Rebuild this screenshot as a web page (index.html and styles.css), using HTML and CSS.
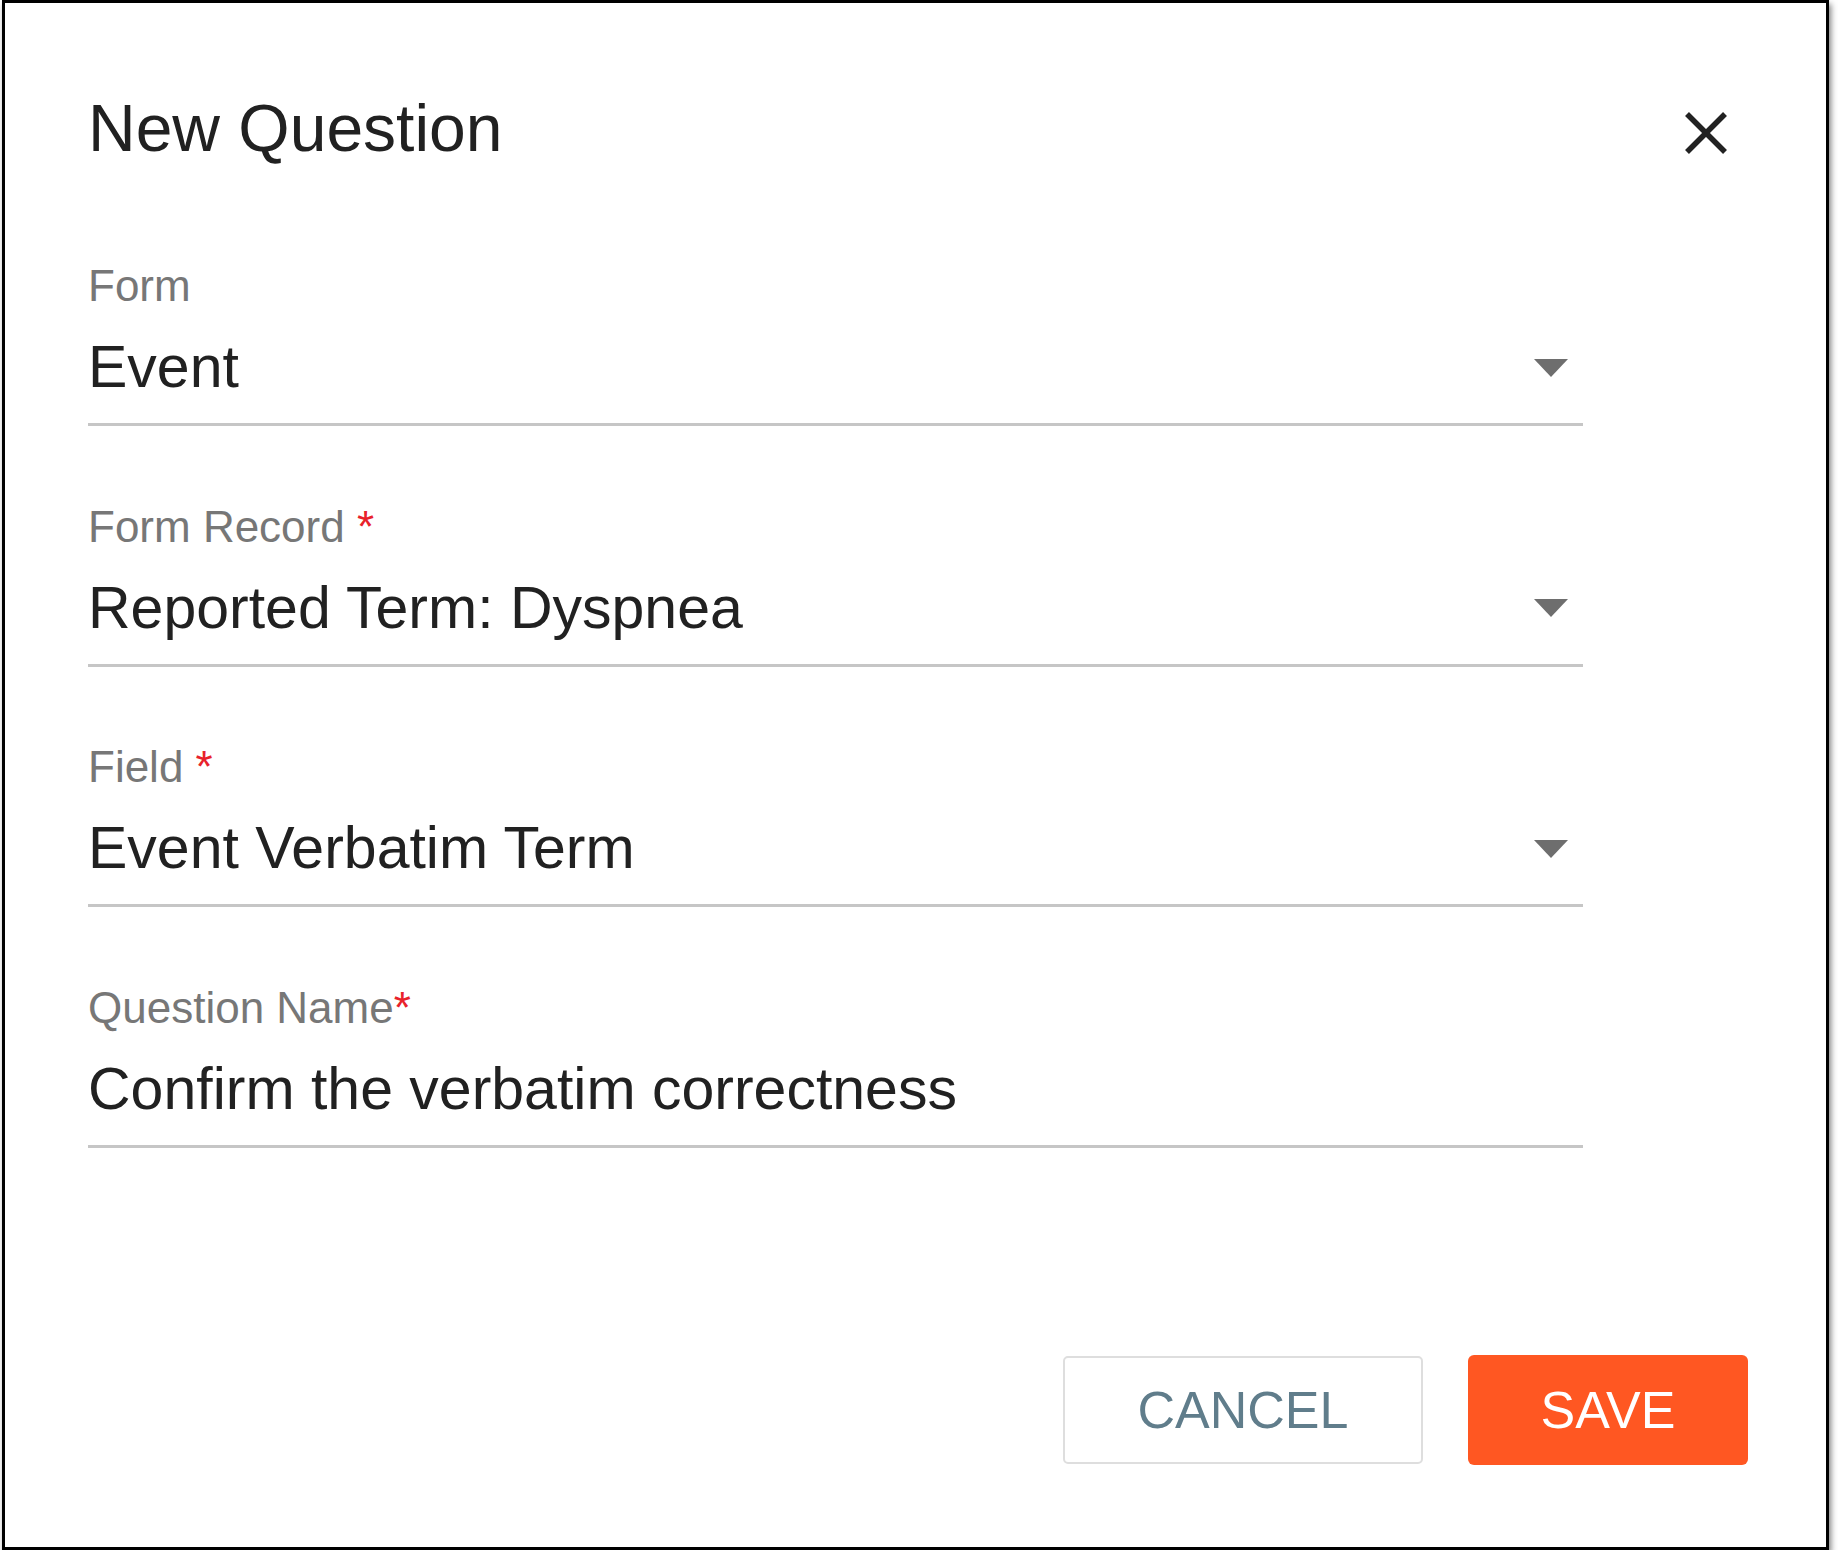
FILE: index.html
```html
<!DOCTYPE html>
<html lang="en">

<head>
    <meta charset="UTF-8">
    <title>New Question</title>
    <link rel="stylesheet" href="styles.css">
</head>

<body>
    <div class="dialogo">
        <div class="cabecalho">
            <h1 class="titulo">New Question</h1>
            <svg class="fechar" width="44" height="44" viewBox="0 0 44 44">
                <line x1="3" y1="3" x2="41" y2="41" />
                <line x1="41" y1="3" x2="3" y2="41" />
            </svg>
        </div>

        <div class="campos">
            <div class="campo">
                <div class="rotulo">Form</div>
                <div class="valor">
                    <span>Event</span>
                    <span class="seta"></span>
                </div>
            </div>
            <div class="campo">
                <div class="rotulo">Form Record <span class="obrigatorio">*</span></div>
                <div class="valor">
                    <span>Reported Term: Dyspnea</span>
                    <span class="seta"></span>
                </div>
            </div>
            <div class="campo">
                <div class="rotulo">Field <span class="obrigatorio">*</span></div>
                <div class="valor">
                    <span>Event Verbatim Term</span>
                    <span class="seta"></span>
                </div>
            </div>
            <div class="campo">
                <div class="rotulo">Question Name<span class="obrigatorio">*</span></div>
                <div class="valor">
                    <span>Confirm the verbatim correctness</span>
                </div>
            </div>
        </div>

        <div class="rodape">
            <button class="botao botao-cancelar">CANCEL</button>
            <button class="botao botao-salvar">SAVE</button>
        </div>
    </div>
</body>

</html>
```

FILE: styles.css
```css
* {
    margin: 0;
    padding: 0;
    box-sizing: border-box;
}

body {
    background-color: #fff;
    font-family: "Liberation Sans", Arial, sans-serif;
}

.dialogo {
    display: flex;
    flex-direction: column;
    width: 1827px;
    height: 1550px;
    margin-left: 2px;
    padding: 92px 0 82px 83px;
    background-color: #fff;
    border: 3px solid #000;
    box-shadow: 2px 4px 6px rgba(0, 0, 0, 0.5);
}

.cabecalho {
    display: flex;
    justify-content: space-between;
    align-items: flex-start;
    padding-right: 98px;
}

.titulo {
    font-size: 66px;
    line-height: 66px;
    font-weight: normal;
    color: #212121;
}

.fechar {
    margin-top: 16px;
}

.fechar line {
    stroke: #222;
    stroke-width: 5.5;
}

.campos {
    width: 1495px;
    margin-top: 103px;
}

.campo {
    margin-bottom: 78.5px;
    padding-bottom: 26px;
    border-bottom: 3px solid #c6c6c6;
}

.campo:last-child {
    margin-bottom: 0;
}

.rotulo {
    font-size: 44px;
    line-height: 44px;
    color: #777;
    margin-bottom: 30px;
}

.obrigatorio {
    color: #e8222b;
}

.valor {
    display: flex;
    justify-content: space-between;
    align-items: center;
    height: 59px;
    font-size: 59px;
    line-height: 59px;
    color: #212121;
}

.seta {
    width: 0;
    height: 0;
    margin-right: 15px;
    border-left: 17.5px solid transparent;
    border-right: 17.5px solid transparent;
    border-top: 18px solid #6e6e6e;
}

.rodape {
    display: flex;
    justify-content: flex-end;
    align-items: center;
    gap: 45px;
    margin-top: auto;
    padding-right: 78px;
}

.botao {
    font-family: "Liberation Sans", Arial, sans-serif;
    font-size: 52px;
    line-height: 52px;
    cursor: pointer;
}

.botao-cancelar {
    width: 360px;
    height: 108px;
    color: #607d8b;
    background-color: #fff;
    border: 2px solid #dedede;
    border-radius: 5px;
}

.botao-salvar {
    width: 280px;
    height: 110px;
    color: #fff;
    background-color: #ff5722;
    border: none;
    border-radius: 6px;
}
```
